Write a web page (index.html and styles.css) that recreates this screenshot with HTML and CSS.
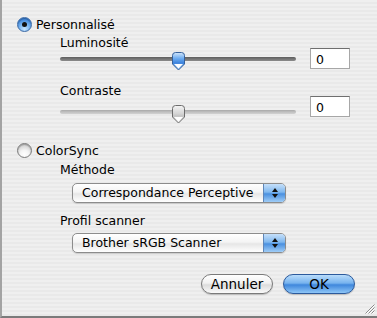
FILE: index.html
```html
<!DOCTYPE html>
<html lang="fr">
<head>
    <meta charset="UTF-8">
    <meta name="viewport" content="width=device-width, initial-scale=1.0">
    <title>Réglages scanner</title>
    <link rel="stylesheet" href="styles.css">
</head>
<body>
    <div class="window">
        <!-- Mode personnalisé -->
        <label class="radio-row first">
            <span class="radio on"></span>
            <span class="radio-text">Personnalisé</span>
        </label>

        <div class="group">
            <div class="slider-block lum">
                <div class="field-label">Luminosité</div>
                <div class="slider">
                    <div class="track dark"></div>
                    <svg class="thumb" style="left: 111px" width="15" height="19" viewBox="0 0 15 19">
                        <defs>
                            <linearGradient id="tb" x1="0" y1="0" x2="0" y2="1">
                                <stop offset="0" stop-color="#d2e6fa"/>
                                <stop offset="0.35" stop-color="#6aaaf0"/>
                                <stop offset="0.6" stop-color="#3d83dc"/>
                                <stop offset="1" stop-color="#9ccbf6"/>
                            </linearGradient>
                        </defs>
                        <path d="M1.5,3.5 Q1.5,0.5 4.5,0.5 H10.5 Q13.5,0.5 13.5,3.5 V12 L7.5,18 L1.5,12 Z" fill="url(#tb)" stroke="#35619c" stroke-width="1"/>
                        <path d="M3,12 L7.5,16.5 L12,12 Z" fill="#fff"/>
                    </svg>
                </div>
                <input class="value-box" type="text" value="0">
            </div>

            <div class="slider-block con">
                <div class="field-label">Contraste</div>
                <div class="slider">
                    <div class="track"></div>
                    <svg class="thumb" style="left: 111px" width="15" height="19" viewBox="0 0 15 19">
                        <defs>
                            <linearGradient id="tg" x1="0" y1="0" x2="0" y2="1">
                                <stop offset="0" stop-color="#f4f4f4"/>
                                <stop offset="0.45" stop-color="#d6d6d6"/>
                                <stop offset="0.6" stop-color="#c4c4c4"/>
                                <stop offset="1" stop-color="#f6f6f6"/>
                            </linearGradient>
                        </defs>
                        <path d="M1.5,3.5 Q1.5,0.5 4.5,0.5 H10.5 Q13.5,0.5 13.5,3.5 V12 L7.5,18 L1.5,12 Z" fill="url(#tg)" stroke="#6c6c6c" stroke-width="1"/>
                        <path d="M3,12 L7.5,16.5 L12,12 Z" fill="#fff"/>
                    </svg>
                </div>
                <input class="value-box" type="text" value="0">
            </div>
        </div>

        <!-- Mode ColorSync -->
        <label class="radio-row second">
            <span class="radio"></span>
            <span class="radio-text">ColorSync</span>
        </label>

        <div class="group">
            <div class="field-label method">Méthode</div>
            <div class="popup first-popup">
                <span class="popup-text">Correspondance Perceptive</span>
                <span class="stepper"><i class="up"></i><i class="down"></i></span>
            </div>
            <div class="field-label profile">Profil scanner</div>
            <div class="popup second-popup">
                <span class="popup-text">Brother sRGB Scanner</span>
                <span class="stepper"><i class="up"></i><i class="down"></i></span>
            </div>
        </div>

        <div class="buttons">
            <button class="btn">Annuler</button>
            <button class="btn default">OK</button>
        </div>

        <svg class="grip" width="10" height="10" viewBox="0 0 10 10">
            <path d="M9.5,0.5 L0.5,9.5 M9.5,3.5 L3.5,9.5 M9.5,6.5 L6.5,9.5" stroke="#8a8a8a" stroke-width="1"/>
            <path d="M9.5,1.5 L1.5,9.5 M9.5,4.5 L4.5,9.5 M9.5,7.5 L7.5,9.5" stroke="#ffffff" stroke-width="1"/>
        </svg>
    </div>
</body>
</html>
```

FILE: styles.css
```css
html, body {
    margin: 0;
    padding: 0;
}
body {
    font-family: "DejaVu Sans", "Liberation Sans", sans-serif;
    font-size: 12.5px;
    color: #000;
    background: #ececec;
}
.window {
    position: relative;
    width: 377px;
    height: 318px;
    box-sizing: border-box;
    border-left: 2px solid #a3a3a3;
    border-bottom: 2px solid #7b7b7b;
    background: repeating-linear-gradient(to bottom, #efefef 0 2px, #e9e9e9 2px 4px);
    display: flex;
    flex-direction: column;
}

/* boutons radio */
.radio-row {
    display: flex;
    align-items: center;
    gap: 4px;
    height: 15px;
    margin-left: 15px;
}
.radio-row.first {
    margin-top: 17px;
}
.radio-row.second {
    margin-top: 19px;
}
.radio {
    width: 13px;
    height: 13px;
    border-radius: 50%;
    border: 1px solid #7a7a7a;
    background: radial-gradient(circle at 50% 80%, #ffffff 0, #f4f4f4 35%, #d2d2d2 75%, #c2c2c2 100%);
    box-shadow: inset 0 1px 1px rgba(0, 0, 0, 0.25);
    position: relative;
}
.radio.on {
    border-color: #3b6aa6;
    background: radial-gradient(circle at 50% 85%, #c9e6ff 0, #7ab6f2 40%, #3f86da 75%, #2f6fc0 100%);
}
.radio.on::after {
    content: "";
    position: absolute;
    left: 4px;
    top: 4px;
    width: 5px;
    height: 5px;
    border-radius: 50%;
    background: #111;
}
.radio-text {
    line-height: 15px;
}

/* groupes indentés */
.group {
    margin-left: 58px;
    display: flex;
    flex-direction: column;
    align-items: flex-start;
}
.field-label {
    line-height: 16px;
}
.slider-block {
    display: grid;
    grid-template-columns: 236px 40px;
    column-gap: 14px;
}
.slider-block .field-label {
    grid-column: 1;
    grid-row: 1;
}
.slider-block .slider {
    grid-column: 1;
    grid-row: 2;
}
.slider-block .value-box {
    grid-column: 2;
    grid-row: 1 / 3;
    align-self: end;
}
.slider-block.lum {
    margin-top: 3px;
}
.slider-block.lum .slider {
    margin-top: 1px;
}
.slider-block.lum .value-box {
    margin-bottom: 2px;
}
.slider-block.con {
    margin-top: 12px;
}
.slider-block.con .slider {
    margin-top: 6px;
}
.slider-block.con .value-box {
    margin-bottom: 7px;
}
.slider {
    position: relative;
    height: 19px;
}
.track {
    position: absolute;
    left: 0;
    right: 0;
    top: 5px;
    height: 4px;
    border-radius: 2px;
    background: linear-gradient(to bottom, #a8a8a8, #c0c0c0 50%, #d2d2d2);
}
.track.dark {
    background: linear-gradient(to bottom, #5c5c5c, #747474 50%, #8c8c8c);
}
.thumb {
    position: absolute;
    top: 0;
    display: block;
}
.value-box {
    width: 40px;
    height: 21px;
    box-sizing: border-box;
    margin: 0;
    padding: 1px 0 0 5px;
    border: 1px solid #a7a7a7;
    border-top-color: #6f6f6f;
    background: #fff;
    font: inherit;
    color: #000;
    outline: none;
}

/* menus locaux */
.field-label.method {
    margin-top: 4px;
}
.field-label.profile {
    margin-top: 10px;
}
.popup {
    margin-left: 12px;
    width: 214px;
    height: 20px;
    box-sizing: border-box;
    border: 1px solid #8c8c8c;
    border-radius: 5px;
    background: linear-gradient(to bottom, #ffffff, #f4f4f4 45%, #e6e6e6 55%, #ffffff);
    box-shadow: 0 1px 1px rgba(0, 0, 0, 0.15);
    display: flex;
    align-items: center;
    overflow: hidden;
}
.popup.first-popup {
    margin-top: 5px;
}
.popup.second-popup {
    margin-top: 4px;
}
.popup-text {
    flex: 1;
    padding-left: 9px;
    line-height: 18px;
}
.stepper {
    width: 21px;
    height: 18px;
    border-left: 1px solid #5f86b8;
    background: linear-gradient(to bottom, #c6e0fa, #80b8ef 45%, #4a90e0 55%, #9fcdf7);
    display: flex;
    flex-direction: column;
    align-items: center;
    justify-content: center;
    gap: 2px;
}
.stepper i {
    display: block;
    width: 0;
    height: 0;
    border-left: 3px solid transparent;
    border-right: 3px solid transparent;
}
.stepper .up {
    border-bottom: 4px solid #111;
}
.stepper .down {
    border-top: 4px solid #111;
}

/* boutons */
.buttons {
    display: flex;
    justify-content: flex-end;
    gap: 10px;
    margin-top: 21px;
    margin-right: 22px;
}
.btn {
    width: 72px;
    height: 20px;
    box-sizing: border-box;
    padding: 0;
    border: 1px solid #7a7a7a;
    border-radius: 10px;
    background: linear-gradient(to bottom, #ffffff, #f1f1f1 45%, #dcdcdc 55%, #fafafa);
    box-shadow: 0 1px 1px rgba(0, 0, 0, 0.2);
    font: inherit;
    font-size: 13.5px;
    color: #000;
    line-height: 18px;
}
.btn.default {
    border-color: #2c5a9c;
    background: linear-gradient(to bottom, #b9dcfb, #77b3ee 45%, #3f87dc 55%, #8ec6f7);
}
.grip {
    position: absolute;
    right: 2px;
    bottom: 2px;
}
```
